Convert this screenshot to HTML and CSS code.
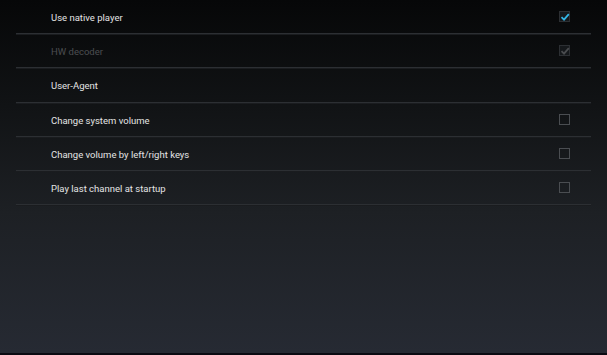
FILE: index.html
```html
<!DOCTYPE html>
<html lang="en">
<head>
  <meta charset="UTF-8">
  <title>Settings</title>
  <link rel="stylesheet" href="styles.css">
</head>
<body>
  <div class="screen">
    <ul class="prefs">
      <li class="pref">
        <span class="label">Use native player</span>
        <span class="check checked">
          <svg viewBox="0 0 12 12" width="12" height="12"><path d="M2.5 6.2 L5 8.6 L9.8 3.2" fill="none" stroke="#33b5e5" stroke-width="1.8"/></svg>
        </span>
      </li>
      <li class="pref disabled">
        <span class="label">HW decoder</span>
        <span class="check checked">
          <svg viewBox="0 0 12 12" width="12" height="12"><path d="M2.5 6.2 L5 8.6 L9.8 3.2" fill="none" stroke="#4a4c4f" stroke-width="1.8"/></svg>
        </span>
      </li>
      <li class="pref">
        <span class="label">User-Agent</span>
      </li>
      <li class="pref">
        <span class="label">Change system volume</span>
        <span class="check"></span>
      </li>
      <li class="pref">
        <span class="label">Change volume by left/right keys</span>
        <span class="check"></span>
      </li>
      <li class="pref">
        <span class="label">Play last channel at startup</span>
        <span class="check"></span>
      </li>
    </ul>
  </div>
</body>
</html>
```

FILE: styles.css
```css
body {
  margin: 0;
  padding: 0;
  font-family: Roboto, 'Noto Sans', sans-serif;
  background: #0a0a12;
}

.screen {
  height: 353px;
  background: linear-gradient(to bottom, #060708 0%, #111315 30%, #1d2024 60%, #262a33 100%);
  overflow: hidden;
}

.prefs {
  list-style: none;
  margin: 0;
  padding: 0 16px;
}

.pref {
  display: flex;
  align-items: center;
  justify-content: space-between;
  height: 33.2px;
  border-bottom: 1px solid #2c2f33;
  box-shadow: 0 1px 0 #1a1c1f;
}

.label {
  padding-left: 35px;
  padding-top: 2px;
  font-size: 9.5px;
  color: #e4e4e4;
}

.disabled .label {
  color: #4c4e51;
}

.check {
  width: 9px;
  height: 9px;
  margin-right: 21px;
  border: 1px solid #4a4d51;
  display: flex;
  align-items: center;
  justify-content: center;
}

.check.checked {
  border-color: #2c2f33;
  background: #15181b;
}

.check svg {
  flex: none;
}
```
